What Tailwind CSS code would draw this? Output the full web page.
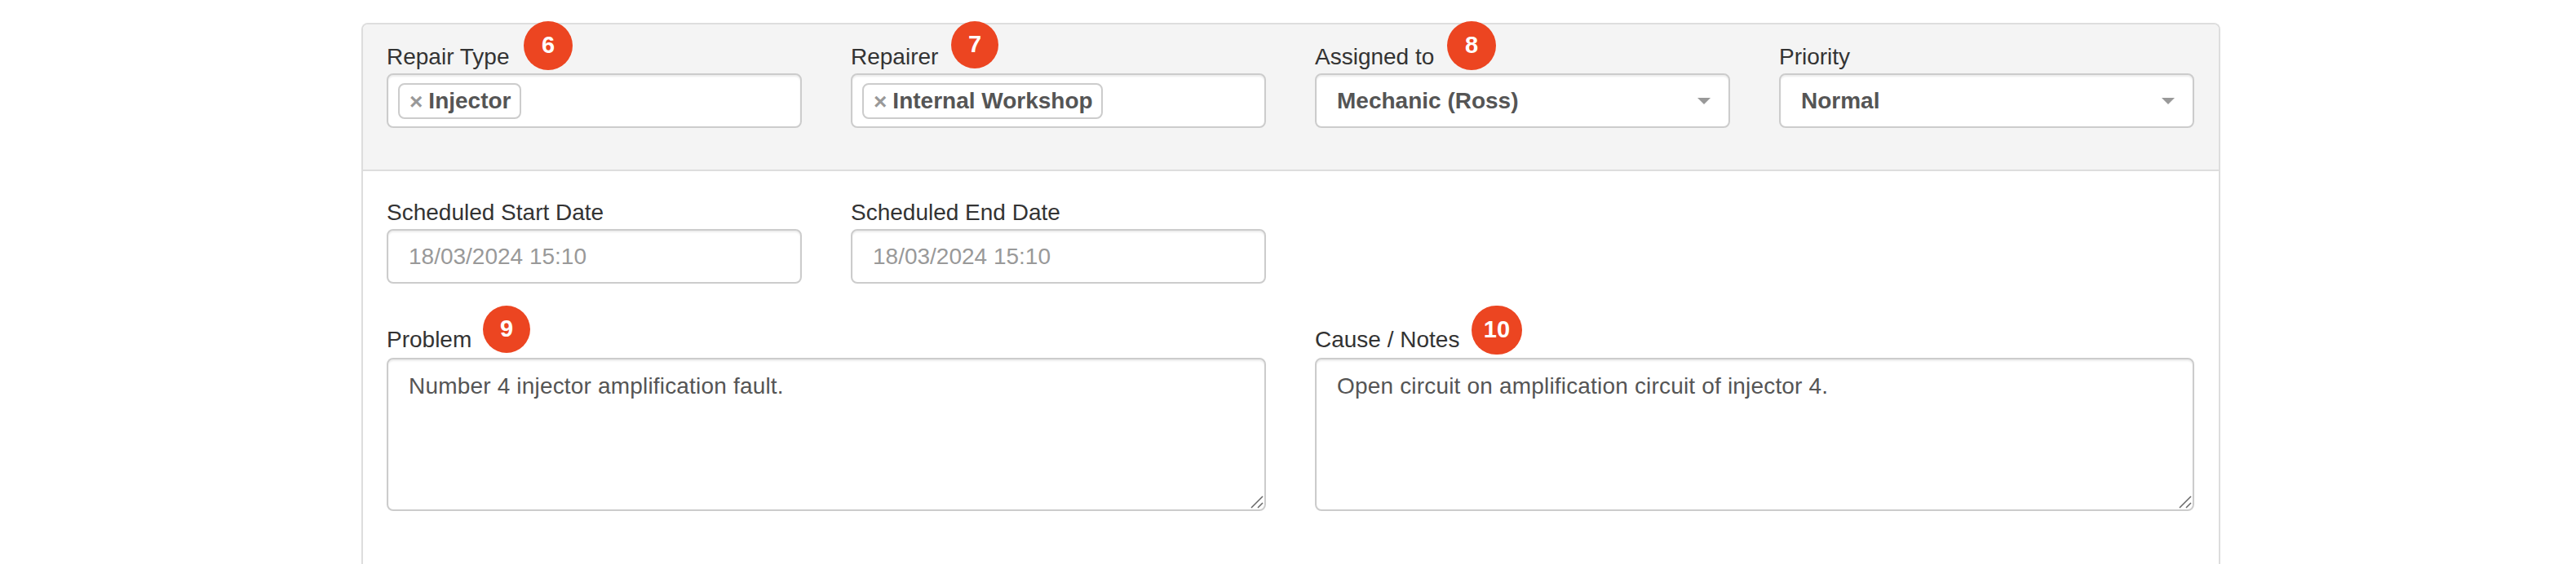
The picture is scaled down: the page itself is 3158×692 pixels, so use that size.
<!DOCTYPE html>
<html lang="en">
<head>
    <meta charset="UTF-8">
    <title>Repair Details</title>
    <script src="https://cdn.jsdelivr.net/npm/@tailwindcss/browser@4"></script>
</head>
<body class="bg-white h-[692px] overflow-hidden font-['Liberation_Sans',Arial,sans-serif] text-[28px] text-[#333]">
    <div class="ml-[443px] mt-[28px] w-[2279px] h-[664px] border-2 border-b-0 border-[#ddd] rounded-t-[8px]">
        <!-- Header fields -->
        <div class="h-[180px] bg-[#f4f4f4] border-b-2 border-[#ddd] rounded-t-[6px] px-[29px] pt-[10px] grid grid-cols-[509px_509px_509px_509px] gap-x-[60px] content-start">
            <div class="relative">
                <label class="block h-[50px] leading-[60px]">Repair Type</label>
                <span class="absolute left-[168px] top-[-14px] w-[60px] h-[60px] rounded-full bg-[#ec4521] text-white font-bold text-[29px] flex items-center justify-center">6</span>
                <div class="h-[67px] bg-white border-2 border-[#ccc] rounded-[8px] shadow-[inset_0_2px_2px_rgba(0,0,0,0.075)] px-[12px] flex items-center">
                    <span class="h-[44px] border-2 border-[#ccc] rounded-[8px] pl-[12px] pr-[10px] flex items-center font-bold text-[#555]"><span class="text-[#999] mr-[7px] pt-[3px]">×</span>Injector</span>
                </div>
            </div>
            <div class="relative">
                <label class="block h-[50px] leading-[60px]">Repairer</label>
                <span class="absolute left-[123px] top-[-14px] w-[58px] h-[58px] rounded-full bg-[#ec4521] text-white font-bold text-[29px] flex items-center justify-center">7</span>
                <div class="h-[67px] bg-white border-2 border-[#ccc] rounded-[8px] shadow-[inset_0_2px_2px_rgba(0,0,0,0.075)] px-[12px] flex items-center">
                    <span class="h-[44px] border-2 border-[#ccc] rounded-[8px] pl-[12px] pr-[10px] flex items-center font-bold text-[#555]"><span class="text-[#999] mr-[7px] pt-[3px]">×</span>Internal Workshop</span>
                </div>
            </div>
            <div class="relative">
                <label class="block h-[50px] leading-[60px]">Assigned to</label>
                <span class="absolute left-[162px] top-[-14px] w-[60px] h-[60px] rounded-full bg-[#ec4521] text-white font-bold text-[29px] flex items-center justify-center">8</span>
                <div class="h-[67px] bg-white border-2 border-[#ccc] rounded-[8px] shadow-[inset_0_2px_2px_rgba(0,0,0,0.075)] pl-[25px] pr-[22px] flex items-center justify-between font-bold text-[#555]">
                    Mechanic (Ross)
                    <span class="w-0 h-0 border-x-[8px] border-x-transparent border-t-[8px] border-t-[#999]"></span>
                </div>
            </div>
            <div>
                <label class="block h-[50px] leading-[60px]">Priority</label>
                <div class="h-[67px] bg-white border-2 border-[#ccc] rounded-[8px] shadow-[inset_0_2px_2px_rgba(0,0,0,0.075)] pl-[25px] pr-[22px] flex items-center justify-between font-bold text-[#555]">
                    Normal
                    <span class="w-0 h-0 border-x-[8px] border-x-transparent border-t-[8px] border-t-[#999]"></span>
                </div>
            </div>
        </div>

        <!-- Body fields -->
        <div class="px-[29px] pt-[20px] grid grid-cols-[509px_509px_509px_509px] gap-x-[60px] content-start">
            <div>
                <label class="block h-[51px] leading-[62px]">Scheduled Start Date</label>
                <div class="h-[67px] bg-white border-2 border-[#ccc] rounded-[8px] shadow-[inset_0_2px_2px_rgba(0,0,0,0.075)] px-[25px] flex items-center text-[#999]">18/03/2024 15:10</div>
            </div>
            <div>
                <label class="block h-[51px] leading-[62px]">Scheduled End Date</label>
                <div class="h-[67px] bg-white border-2 border-[#ccc] rounded-[8px] shadow-[inset_0_2px_2px_rgba(0,0,0,0.075)] px-[25px] flex items-center text-[#999]">18/03/2024 15:10</div>
            </div>
        </div>
        <div class="px-[29px] pt-[39px] grid grid-cols-[1078px_1078px] gap-x-[60px]">
            <div class="relative">
                <label class="block h-[52px] leading-[60px]">Problem</label>
                <span class="absolute left-[118px] top-[-12px] w-[58px] h-[58px] rounded-full bg-[#ec4521] text-white font-bold text-[29px] flex items-center justify-center">9</span>
                <textarea class="block w-full h-[188px] resize-none bg-white border-2 border-[#ccc] rounded-[8px] shadow-[inset_0_2px_2px_rgba(0,0,0,0.075)] px-[25px] pt-[13px] pb-[11px] leading-[40px] tracking-[0.18px] text-[#555]">Number 4 injector amplification fault.</textarea>
                <svg class="absolute right-[3px] bottom-[3px] w-[16px] h-[16px]" viewBox="0 0 16 16" fill="none" stroke="#666" stroke-width="1.5"><path d="M1 15 15 1M9 15l6-6"/></svg>
            </div>
            <div class="relative">
                <label class="block h-[52px] leading-[60px]">Cause / Notes</label>
                <span class="absolute left-[192px] top-[-12px] w-[62px] h-[60px] rounded-full bg-[#ec4521] text-white font-bold text-[29px] flex items-center justify-center">10</span>
                <textarea class="block w-full h-[188px] resize-none bg-white border-2 border-[#ccc] rounded-[8px] shadow-[inset_0_2px_2px_rgba(0,0,0,0.075)] px-[25px] pt-[13px] pb-[11px] leading-[40px] tracking-[0.18px] text-[#555]">Open circuit on amplification circuit of injector 4.</textarea>
                <svg class="absolute right-[3px] bottom-[3px] w-[16px] h-[16px]" viewBox="0 0 16 16" fill="none" stroke="#666" stroke-width="1.5"><path d="M1 15 15 1M9 15l6-6"/></svg>
            </div>
        </div>
    </div>
</body>
</html>
